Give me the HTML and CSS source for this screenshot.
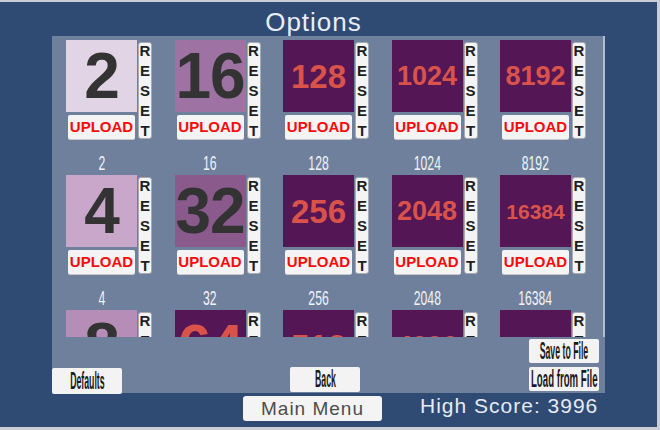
FILE: index.html
```html
<!DOCTYPE html>
<html>
<head>
<meta charset="utf-8">
<link rel="stylesheet" href="styles.css">
</head>
<body>
<div class="screen">
  <h1 class="title">Options</h1>
  <div class="panel">
    <div class="viewport">
      <div class="grid">
        <div class="cell">
          <div class="label"></div>
          <div class="tile t2"><span class="num xl">2</span></div>
          <button class="reset"><span class="reset-text">RESET</span></button>
          <button class="upload">UPLOAD</button>
        </div>
        <div class="cell">
          <div class="label"></div>
          <div class="tile t16"><span class="num xl">16</span></div>
          <button class="reset"><span class="reset-text">RESET</span></button>
          <button class="upload">UPLOAD</button>
        </div>
        <div class="cell">
          <div class="label"></div>
          <div class="tile dark"><span class="num lg">128</span></div>
          <button class="reset"><span class="reset-text">RESET</span></button>
          <button class="upload">UPLOAD</button>
        </div>
        <div class="cell">
          <div class="label"></div>
          <div class="tile dark"><span class="num md">1024</span></div>
          <button class="reset"><span class="reset-text">RESET</span></button>
          <button class="upload">UPLOAD</button>
        </div>
        <div class="cell">
          <div class="label"></div>
          <div class="tile dark"><span class="num md">8192</span></div>
          <button class="reset"><span class="reset-text">RESET</span></button>
          <button class="upload">UPLOAD</button>
        </div>

        <div class="cell">
          <div class="label"><span>2</span></div>
          <div class="tile t4"><span class="num xl">4</span></div>
          <button class="reset"><span class="reset-text">RESET</span></button>
          <button class="upload">UPLOAD</button>
        </div>
        <div class="cell">
          <div class="label"><span>16</span></div>
          <div class="tile t32"><span class="num xl">32</span></div>
          <button class="reset"><span class="reset-text">RESET</span></button>
          <button class="upload">UPLOAD</button>
        </div>
        <div class="cell">
          <div class="label"><span>128</span></div>
          <div class="tile dark"><span class="num lg">256</span></div>
          <button class="reset"><span class="reset-text">RESET</span></button>
          <button class="upload">UPLOAD</button>
        </div>
        <div class="cell">
          <div class="label"><span>1024</span></div>
          <div class="tile dark"><span class="num md">2048</span></div>
          <button class="reset"><span class="reset-text">RESET</span></button>
          <button class="upload">UPLOAD</button>
        </div>
        <div class="cell">
          <div class="label"><span>8192</span></div>
          <div class="tile dark"><span class="num sm">16384</span></div>
          <button class="reset"><span class="reset-text">RESET</span></button>
          <button class="upload">UPLOAD</button>
        </div>

        <div class="cell">
          <div class="label"><span>4</span></div>
          <div class="tile t8"><span class="num xl">8</span></div>
          <button class="reset"><span class="reset-text">RESET</span></button>
          <button class="upload">UPLOAD</button>
        </div>
        <div class="cell">
          <div class="label"><span>32</span></div>
          <div class="tile dark"><span class="num xl red">64</span></div>
          <button class="reset"><span class="reset-text">RESET</span></button>
          <button class="upload">UPLOAD</button>
        </div>
        <div class="cell">
          <div class="label"><span>256</span></div>
          <div class="tile dark"><span class="num lg">512</span></div>
          <button class="reset"><span class="reset-text">RESET</span></button>
          <button class="upload">UPLOAD</button>
        </div>
        <div class="cell">
          <div class="label"><span>2048</span></div>
          <div class="tile dark"><span class="num md">4096</span></div>
          <button class="reset"><span class="reset-text">RESET</span></button>
          <button class="upload">UPLOAD</button>
        </div>
        <div class="cell">
          <div class="label"><span>16384</span></div>
          <div class="tile dark"><span class="num sm">32768</span></div>
          <button class="reset"><span class="reset-text">RESET</span></button>
          <button class="upload">UPLOAD</button>
        </div>
      </div>
    </div>
    <div class="footer">
      <button class="btn defaults"><span class="squish">Defaults</span></button>
      <button class="btn back"><span class="squish">Back</span></button>
      <div class="file-btns">
        <button class="btn"><span class="squish">Save to File</span></button>
        <button class="btn"><span class="squish wide">Load from File</span></button>
      </div>
    </div>
  </div>
  <div class="bottom">
    <button class="main-menu">Main Menu</button>
    <div class="score">High Score: 3996</div>
  </div>
</div>
</body>
</html>
```

FILE: styles.css
```css
* { box-sizing: border-box; }

html, body {
  margin: 0;
  padding: 0;
}

body {
  background: #c9ced6;
  width: 660px;
  height: 430px;
  overflow: hidden;
  font-family: "Liberation Sans", Arial, sans-serif;
}

.screen {
  margin-top: 2px;
  width: 657px;
  height: 425px;
  background: #2f4a73;
  display: flex;
  flex-direction: column;
}

.title {
  margin: 0;
  width: 627px;
  height: 34px;
  padding-top: 6px;
  line-height: 28px;
  text-align: center;
  font-size: 26px;
  font-weight: normal;
  letter-spacing: 1px;
  color: #e8edf6;
}

.panel {
  margin-left: 52px;
  width: 553px;
  height: 357px;
  background: #6f809d;
  display: flex;
  flex-direction: column;
}

.viewport {
  height: 301px;
  overflow: hidden;
  border-right: 2px solid #b3bcca;
}

.grid {
  margin-top: -20px;
  margin-left: 14px;
  display: grid;
  grid-template-columns: repeat(5, 86px);
  column-gap: 22.5px;
  row-gap: 12px;
}

.cell {
  display: grid;
  grid-template-columns: 71px 14px;
  column-gap: 1px;
  grid-template-rows: 24px 72px 3px 24px;
  grid-template-areas:
    "label ."
    "tile reset"
    ". reset"
    "upload reset";
}

.label {
  grid-area: label;
  display: flex;
  justify-content: center;
  align-items: center;
  line-height: 24px;
  overflow: visible;
}

.label span {
  display: inline-block;
  font-size: 21px;
  color: #f1f3f7;
  transform: scaleX(0.58);
  white-space: nowrap;
}

.tile {
  grid-area: tile;
  display: flex;
  align-items: center;
  justify-content: center;
  overflow: hidden;
}

.t2 { background: #e1d4e4; }
.t4 { background: #c9a7ca; }
.t8 { background: #b68db7; }
.t16 { background: #9e72a2; }
.t32 { background: #8b5a8d; }
.dark { background: #551656; }

.num {
  font-weight: bold;
  line-height: 1;
  white-space: nowrap;
}

.num.xl {
  font-size: 64px;
  color: #333333;
  letter-spacing: -1px;
}

.num.xl.red { color: #d9534b; font-size: 60px; }

.num.lg { font-size: 33px; color: #d9534b; }
.num.md { font-size: 27px; color: #d9534b; }
.num.sm { font-size: 21px; color: #d9534b; }

.upload {
  grid-area: upload;
  margin: 0 2px;
  padding: 0;
  border: none;
  border-radius: 2px;
  background: #f4f4f4;
  box-shadow: 0 1px 0 #c7c9cd;
  color: #f50d0d;
  font-family: "Liberation Sans", Arial, sans-serif;
  font-weight: bold;
  font-size: 15px;
  line-height: 24px;
  text-align: center;
}

.reset {
  grid-area: reset;
  margin-top: 2px;
  padding: 0;
  border: 1px solid #a9abb0;
  border-radius: 3px;
  background: #f4f4f4;
  display: flex;
  align-items: center;
  justify-content: center;
  overflow: visible;
}

.reset-text {
  display: block;
  width: 12px;
  word-break: break-all;
  text-align: center;
  font-family: "Liberation Sans", Arial, sans-serif;
  font-weight: bold;
  font-size: 15px;
  line-height: 20px;
  color: #1e1e1e;
}

.footer {
  flex: 1;
  display: flex;
  align-items: flex-end;
}

.btn {
  width: 70px;
  padding: 0;
  border: none;
  border-radius: 2px;
  background: #f3f3f3;
  display: flex;
  align-items: center;
  justify-content: center;
  overflow: visible;
}

.squish {
  display: inline-block;
  font-family: "Liberation Sans", Arial, sans-serif;
  font-weight: bold;
  font-size: 23px;
  line-height: 23px;
  color: #1a1a1a;
  white-space: nowrap;
  transform: scaleX(0.38);
}

.squish.wide { transform: scaleX(0.42); }

.defaults {
  height: 26px;
  margin-bottom: -1px;
}

.back {
  height: 25px;
  margin-left: 168px;
  margin-bottom: 1px;
}

.file-btns {
  margin-left: 169px;
  margin-bottom: 2px;
  display: flex;
  flex-direction: column;
  gap: 4px;
}

.file-btns .btn { height: 24px; }

.bottom {
  display: flex;
  align-items: flex-start;
  padding-left: 243px;
}

.main-menu {
  margin-top: 3px;
  width: 139px;
  height: 25px;
  padding: 0;
  border: none;
  border-radius: 3px;
  background: #f4f4f4;
  font-family: "Liberation Sans", Arial, sans-serif;
  font-size: 19px;
  letter-spacing: 1px;
  color: #4d4d4d;
  line-height: 25px;
  text-align: center;
}

.score {
  margin-left: 38px;
  margin-top: 2px;
  font-size: 21px;
  line-height: 21px;
  letter-spacing: 1px;
  color: #e6ebf4;
  white-space: nowrap;
}
```
